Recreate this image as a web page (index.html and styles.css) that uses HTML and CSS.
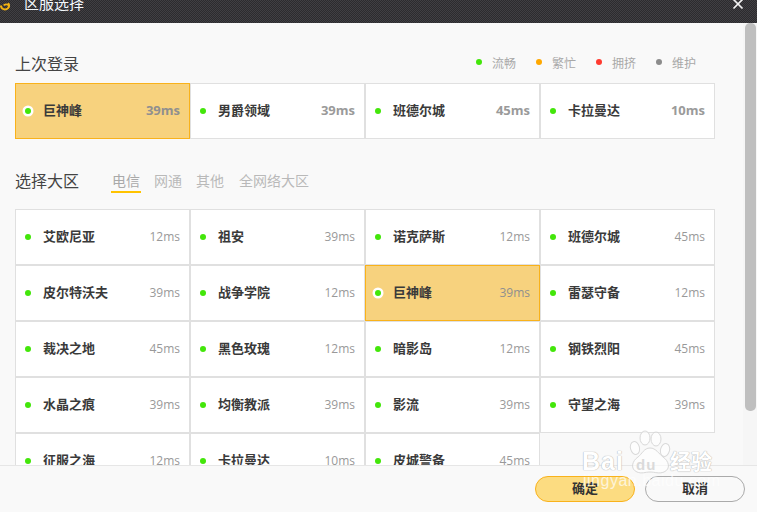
FILE: index.html
```html
<!DOCTYPE html>
<html lang="zh">
<head>
<meta charset="utf-8">
<title>区服选择</title>
<link rel="stylesheet" href="styles.css">
</head>
<body>
<div class="dialog">
  <header class="titlebar">
    <div class="title-left">
      <svg class="logo" width="11" height="12" viewBox="0 0 11 12"><path d="M1 5.5A4 4 0 0 0 9 5.5C9 4.5 8.6 3.8 8 3.2" fill="none" stroke="#f3b312" stroke-width="2.2"/><path d="M3.6 5.2c1.6-.9 3.200-1 4.800-.4" fill="none" stroke="#f3b312" stroke-width="1.8"/></svg>
      <span class="title-text">区服选择</span>
    </div>
    <svg class="close" width="12" height="12" viewBox="0 0 12 12"><path d="M1.5 1.5l9 9M10.5 1.500l-9 9" stroke="#f4f4f4" stroke-width="1.7"/></svg>
  </header>
  <div class="body">
    <main class="content">
      <div class="head-row last-head">
        <h2 class="heading">上次登录</h2>
        <ul class="legend">
          <li class="legend-item"><i class="dot green"></i>流畅</li>
          <li class="legend-item"><i class="dot orange"></i>繁忙</li>
          <li class="legend-item"><i class="dot red"></i>拥挤</li>
          <li class="legend-item"><i class="dot gray"></i>维护</li>
        </ul>
      </div>
      <div class="grid strong">
        <div class="card selected"><i class="dot green"></i><span class="name">巨神峰</span><span class="ms">39ms</span></div>
        <div class="card"><i class="dot green"></i><span class="name">男爵领域</span><span class="ms">39ms</span></div>
        <div class="card"><i class="dot green"></i><span class="name">班德尔城</span><span class="ms">45ms</span></div>
        <div class="card"><i class="dot green"></i><span class="name">卡拉曼达</span><span class="ms">10ms</span></div>
      </div>
      <div class="head-row pick-head">
        <h2 class="heading">选择大区</h2>
        <nav class="tabs">
          <span class="tab active">电信</span>
          <span class="tab">网通</span>
          <span class="tab">其他</span>
          <span class="tab wide">全网络大区</span>
        </nav>
      </div>
      <div class="grid">
        <div class="card"><i class="dot green"></i><span class="name">艾欧尼亚</span><span class="ms">12ms</span></div>
        <div class="card"><i class="dot green"></i><span class="name">祖安</span><span class="ms">39ms</span></div>
        <div class="card"><i class="dot green"></i><span class="name">诺克萨斯</span><span class="ms">12ms</span></div>
        <div class="card"><i class="dot green"></i><span class="name">班德尔城</span><span class="ms">45ms</span></div>
        <div class="card"><i class="dot green"></i><span class="name">皮尔特沃夫</span><span class="ms">39ms</span></div>
        <div class="card"><i class="dot green"></i><span class="name">战争学院</span><span class="ms">12ms</span></div>
        <div class="card selected"><i class="dot green"></i><span class="name">巨神峰</span><span class="ms">39ms</span></div>
        <div class="card"><i class="dot green"></i><span class="name">雷瑟守备</span><span class="ms">12ms</span></div>
        <div class="card"><i class="dot green"></i><span class="name">裁决之地</span><span class="ms">45ms</span></div>
        <div class="card"><i class="dot green"></i><span class="name">黑色玫瑰</span><span class="ms">12ms</span></div>
        <div class="card"><i class="dot green"></i><span class="name">暗影岛</span><span class="ms">12ms</span></div>
        <div class="card"><i class="dot green"></i><span class="name">钢铁烈阳</span><span class="ms">45ms</span></div>
        <div class="card"><i class="dot green"></i><span class="name">水晶之痕</span><span class="ms">39ms</span></div>
        <div class="card"><i class="dot green"></i><span class="name">均衡教派</span><span class="ms">39ms</span></div>
        <div class="card"><i class="dot green"></i><span class="name">影流</span><span class="ms">39ms</span></div>
        <div class="card"><i class="dot green"></i><span class="name">守望之海</span><span class="ms">39ms</span></div>
        <div class="card"><i class="dot green"></i><span class="name">征服之海</span><span class="ms">12ms</span></div>
        <div class="card"><i class="dot green"></i><span class="name">卡拉曼达</span><span class="ms">10ms</span></div>
        <div class="card"><i class="dot green"></i><span class="name">皮城警备</span><span class="ms">45ms</span></div>
      </div>
    </main>
    <div class="scrolltrack"><div class="scrollthumb"></div></div>
  </div>
  <footer class="footer">
    <button class="btn primary"><span class="btn-label">确定</span></button>
    <button class="btn"><span class="btn-label">取消</span></button>
  </footer>
  <div class="watermark">
    <svg class="paw" width="44" height="48" viewBox="0 0 44 48">
      <g fill="#fff" fill-opacity=".72" stroke="#d4d4d4" stroke-width="1">
        <ellipse cx="7" cy="18" rx="4.5" ry="6.5" transform="rotate(-15 7 18)"/>
        <ellipse cx="17" cy="8" rx="5" ry="7"/>
        <ellipse cx="28" cy="9" rx="5" ry="7"/>
        <ellipse cx="37" cy="20" rx="4.5" ry="6.5" transform="rotate(15 37 20)"/>
        <path d="M9 42c-7-3-5-11 1-15 4-3 6-9 12-9s9 6 13 9c6 4 8 12 1 15-5 2-9 0-14 0s-8 2-13 0z"/>
      </g>
    </svg>
    <span class="wm-bai">Bai</span>
    <span class="wm-du">du</span>
    <span class="wm-cn">经验</span>
    <span class="wm-url">jingyan.baidu.com</span>
  </div>
</div>
</body>
</html>
```
FILE: styles.css
```css
* { box-sizing: border-box; }
html, body { margin: 0; padding: 0; }
body {
  width: 757px;
  height: 512px;
  overflow: hidden;
  font-family: "Noto Sans CJK SC", "Open Sans", sans-serif;
  background: #f9f9f9;
}
.dialog {
  position: relative;
  width: 757px;
  height: 512px;
  display: flex;
  flex-direction: column;
  overflow: hidden;
}
.titlebar {
  flex: none;
  height: 23px;
  display: flex;
  justify-content: space-between;
  align-items: flex-end;
  padding: 0 14px 11px 0;
  overflow: hidden;
  background-color: #333236;
  background-image: conic-gradient(#2c2b2e 25%, #403f43 0 50%, #2c2b2e 0 75%, #403f43 0);
  background-size: 2px 2px;
}
.title-left { display: flex; align-items: flex-end; gap: 13px; }
.logo { flex: none; margin-bottom: 0; }
.title-text {
  display: block;
  font-size: 15px;
  line-height: 18px;
  color: #f4f8fc;
}
.close { flex: none; margin-bottom: 2px; margin-right: -1px; }
.body {
  position: relative;
  flex: none;
  height: 442px;
  overflow: hidden;
}
.content { padding: 0 0 0 15px; width: 743px; }
.head-row { display: flex; align-items: center; }
.last-head { height: 60px; justify-content: space-between; padding: 20px 22px 0 0; width: 722px; }
.pick-head { height: 70px; padding: 12px 0 0; }
.heading {
  margin: 0;
  font-size: 16px;
  font-weight: 400;
  line-height: 24px;
  color: #444;
}
.legend {
  list-style: none;
  margin: 0 0 2px;
  padding: 0;
  display: flex;
}
.legend-item {
  width: 60px;
  display: flex;
  align-items: center;
  gap: 10px;
  font-size: 12px;
  color: #a8a8a8;
  padding-left: 1px;
}
.dot {
  flex: none;
  display: block;
  width: 6px;
  height: 6px;
  border-radius: 50%;
}
.green { background: #43e60a; }
.orange { background: #ffa800; }
.red { background: #ff3b30; }
.gray { background: #8c8c8c; }
.tabs { display: flex; gap: 14px; margin: 3px 0 0 33px; }
.tab {
  font-size: 14px;
  line-height: 20px;
  color: #b9b9b9;
  padding-bottom: 1px;
}
.tab.wide { margin-left: 1px; }
.tab.active {
  color: #a9a9a9;
  margin: 0 -1px;
  padding: 0 1px 1px;
  border-bottom: 2px solid #ffc300;
}
.grid {
  display: grid;
  grid-template-columns: repeat(4, 175px);
  grid-auto-rows: 56px;
}
.card {
  display: flex;
  align-items: center;
  padding: 0 9px;
  background: #fff;
  border: 1px solid #e0e0e0;
}
.card .dot { margin-right: 12px; }
.name {
  flex: 1;
  font-size: 13px;
  font-weight: 700;
  color: #3a3a3a;
  line-height: 18px;
  padding-bottom: 2px;
}
.ms {
  font-family: "Open Sans", sans-serif;
  font-size: 12px;
  color: #999;
  padding-bottom: 2px;
}
.strong .ms { font-size: 13px; font-weight: 700; color: #9a9a9a; }
.card.selected {
  background: #f7d27e;
  border-color: #f9b21b;
}
.card.selected .dot { box-shadow: 0 0 0 2.5px #fff; }
.card.selected .ms { color: #8f8f8f; }
.scrolltrack {
  position: absolute;
  top: 0;
  right: 0;
  bottom: 0;
  width: 14px;
  background: #f6f6f6;
  padding: 0 1px 0 2px;
}
.scrollthumb {
  height: 388px;
  background: #bfbfbf;
  border-radius: 5px;
}
.footer {
  position: relative;
  flex: 1;
  display: flex;
  justify-content: flex-end;
  align-items: flex-start;
  gap: 10px;
  padding: 10px 12px 0 0;
  background: #f9f9f9;
  border-top: 1px solid #e6e6e6;
}
.btn {
  width: 100px;
  height: 26px;
  padding: 0 0 2px;
  border: 1px solid #aaa;
  border-radius: 13px;
  background: #f9f9f9;
  font-family: inherit;
  font-size: 13px;
  font-weight: 700;
  color: #333;
}
.btn.primary {
  background: #fcdc81;
  border-color: #f9b21b;
}
.btn-label { display: block; line-height: 20px; }
.watermark {
  position: absolute;
  left: 578px;
  top: 430px;
  width: 145px;
  height: 70px;
  color: #fff;
  pointer-events: none;
}
.paw { position: absolute; left: 50px; top: 0; opacity: .85; }
.wm-bai, .wm-du, .wm-cn, .wm-url { position: absolute; white-space: nowrap; }
.wm-bai {
  left: 4px;
  top: 16px;
  font-family: "Liberation Sans", sans-serif;
  font-size: 25px;
  font-weight: 700;
  line-height: 30px;
  letter-spacing: 1px;
  text-shadow: 0 0 1px #b4b4b4, 0 0 1px #b4b4b4;
}
.wm-du {
  left: 58px;
  top: 26px;
  font-family: "Liberation Sans", sans-serif;
  font-size: 15px;
  font-weight: 700;
  line-height: 18px;
  letter-spacing: 1px;
  color: #dadada;
}
.wm-cn {
  left: 92px;
  top: 17px;
  font-size: 21px;
  line-height: 26px;
  font-weight: 700;
  text-shadow: 0 0 1px #b4b4b4, 0 0 1px #b4b4b4;
}
.wm-url {
  left: 5px;
  top: 41px;
  font-family: "Liberation Sans", sans-serif;
  font-size: 16px;
  line-height: 20px;
  letter-spacing: .5px;
  opacity: .7;
}
```
